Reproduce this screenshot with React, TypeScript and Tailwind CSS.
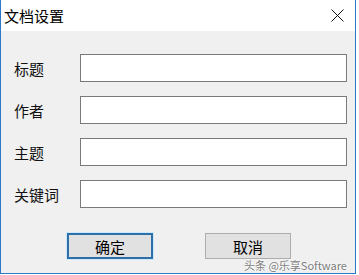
const fields = ['标题', '作者', '主题', '关键词'];

const App = () => {
  return (
    <div
      className="relative w-[359px] h-[275px] bg-white overflow-hidden"
      style={{ fontFamily: '"Noto Sans CJK SC", "Liberation Sans", sans-serif' }}
    >
      <div className="flex flex-col w-[356px] h-[274px] border-x border-b border-[#2b79c7]">
        {/* title bar */}
        <div className="flex items-center justify-between h-[31px] bg-white pl-[3px] pr-[11px]">
          <span className="text-[15px] leading-none text-black">文档设置</span>
          <svg width="13" height="13" viewBox="0 0 13 13" className="mt-[-1px]">
            <path d="M0.5 0.5 L12.5 12.5 M12.5 0.5 L0.5 12.5" stroke="#111" strokeWidth="1" />
          </svg>
        </div>

        <div className="flex-1 bg-[#f0f0f0] pt-[23px] pl-[13px] pr-[8px]">
          <div className="flex flex-col gap-[14px]">
            {fields.map((f) => (
              <div key={f} className="flex items-center h-[28px]">
                <span className="w-[66px] text-[15px] leading-none text-[#111]">{f}</span>
                <input
                  className="flex-1 h-[28px] bg-white border border-[#7a7a7a] outline-none px-1 text-[14px]"
                  defaultValue=""
                />
              </div>
            ))}
          </div>

          <div className="flex mt-[25px] pl-[53px] gap-[52px]">
            <button className="w-[86px] h-[26px] bg-[#e1e1e1] border-2 border-[#2d6fa6] ring-1 ring-[#cde8fb] text-[15px] leading-none text-black">
              确定
            </button>
            <button className="w-[86px] h-[26px] bg-[#e1e1e1] border border-[#adadad] text-[15px] leading-none text-black">
              取消
            </button>
          </div>
        </div>
      </div>

      <span
        className="absolute left-[244px] top-[260px] text-[11px] leading-none text-[#7d7d7d]"
        style={{ textShadow: '0 0 2px #fff, 0 0 2px #fff' }}
      >
        头条 @乐享Software
      </span>
    </div>
  );
};

export default App;
